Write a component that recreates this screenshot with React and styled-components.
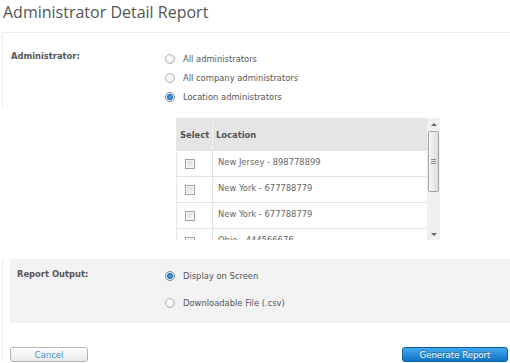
import React from "react";
import styled, { createGlobalStyle } from "styled-components";

const GlobalStyle = createGlobalStyle`
  html, body {
    margin: 0;
    padding: 0;
    background: #fff;
  }
  body {
    width: 510px;
    height: 363px;
    overflow: hidden;
    font-family: "DejaVu Sans Condensed", "Liberation Sans", sans-serif;
    font-size: 9.3px;
    color: #555;
  }
`;

const locations = [
  "New Jersey - 898778899",
  "New York - 677788779",
  "New York - 677788779",
  "Ohio - 444566676",
];

const App = () => {
  return (
    <Page>
      <GlobalStyle />
      <Title>Administrator Detail Report</Title>
      <Panel>
        <Section edge>
          <FieldRow>
            <FieldLabel>Administrator:</FieldLabel>
            <Options>
              <Option>
                <Radio />
                <span>All administrators</span>
              </Option>
              <Option>
                <Radio />
                <span>All company administrators</span>
              </Option>
              <Option>
                <Radio checked />
                <span>Location administrators</span>
              </Option>
            </Options>
          </FieldRow>
        </Section>

        <TableArea>
          <TableBox>
            <Grid>
              <HeadRow>
                <HeadCell>Select</HeadCell>
                <HeadCell>Location</HeadCell>
              </HeadRow>
              {locations.map((loc, i) => (
                <BodyRow key={i}>
                  <CheckCell>
                    <Checkbox />
                  </CheckCell>
                  <TextCell>{loc}</TextCell>
                </BodyRow>
              ))}
            </Grid>
            <Scrollbar>
              <Arrow />
              <Track>
                <Thumb>
                  <Grip />
                </Thumb>
              </Track>
              <Arrow down />
            </Scrollbar>
          </TableBox>
        </TableArea>

        <Section edge>
          <OutputBox>
            <OutputLabel>Report Output:</OutputLabel>
            <Options>
              <Option tall>
                <Radio checked />
                <span>Display on Screen</span>
              </Option>
              <Option tall>
                <Radio />
                <span>Downloadable File (.csv)</span>
              </Option>
            </Options>
          </OutputBox>
          <Actions>
            <CancelButton>Cancel</CancelButton>
            <PrimaryButton>Generate Report</PrimaryButton>
          </Actions>
        </Section>
      </Panel>
    </Page>
  );
};

export default App;

const Page = styled.div`
  width: 510px;
`;

const Title = styled.h1`
  margin: 0;
  height: 32px;
  padding: 1px 0 0 3px;
  font-family: "Open Sans", "Liberation Sans", sans-serif;
  font-size: 16px;
  font-weight: 400;
  line-height: 22px;
  color: #555;
  box-sizing: border-box;
`;

const Panel = styled.div`
  border-top: 1px solid #ececec;
  margin-left: 2px;
`;

const Section = styled.div`
  border-left: 1px solid ${({ edge }) => (edge ? "#ececec" : "transparent")};
`;

const FieldRow = styled.div`
  display: flex;
  padding: 16px 0 1px 8px;
`;

const FieldLabel = styled.div`
  width: 154px;
  font-weight: 700;
  line-height: 13px;
`;

const Options = styled.div`
  display: flex;
  flex-direction: column;
`;

const Option = styled.label`
  display: flex;
  align-items: center;
  height: ${({ tall }) => (tall ? "27px" : "19px")};
  gap: 8px;
  color: #555;
`;

const Radio = styled.span`
  display: inline-block;
  width: 10px;
  height: 10px;
  border-radius: 50%;
  border: 1px solid ${({ checked }) => (checked ? "#7f8a96" : "#b4b4b4")};
  background: ${({ checked }) =>
    checked
      ? "radial-gradient(circle at 50% 50%, #5ab0ee 0, #1c6fc0 2.5px, #e8eef4 3.5px, #f6f6f6 100%)"
      : "radial-gradient(circle at 40% 40%, #ffffff 0, #e4e4e4 100%)"};
  box-sizing: border-box;
  flex: none;
`;

const TableArea = styled.div`
  padding: 11px 0 0 174px;
`;

const TableBox = styled.div`
  display: flex;
  width: 264px;
  height: 122px;
  overflow: hidden;
`;

const Grid = styled.div`
  flex: 1;
  border-left: 1px solid #e6e6e6;
`;

const HeadRow = styled.div`
  display: grid;
  grid-template-columns: 36px 1fr;
  height: 32px;
  background: #e5e5e5;
`;

const HeadCell = styled.div`
  display: flex;
  align-items: center;
  padding-left: 3px;
  font-weight: 700;
  color: #555;
  &:first-child {
    border-right: 1px solid #f2f2f2;
  }
`;

const BodyRow = styled.div`
  display: grid;
  grid-template-columns: 36px 1fr;
  height: 26px;
  border-top: 1px solid #e3e3e3;
  box-sizing: border-box;
  &:first-of-type {
    border-top: none;
  }
`;

const CheckCell = styled.div`
  display: flex;
  align-items: center;
  padding-left: 8px;
  border-right: 1px solid #e3e3e3;
`;

const TextCell = styled.div`
  padding: 5px 0 0 5px;
  color: #666;
`;

const Checkbox = styled.span`
  display: inline-block;
  width: 10px;
  height: 10px;
  border: 1px solid #a2a2a2;
  background: linear-gradient(#dedede, #f4f4f4);
  box-shadow: inset 0 0 0 1px #f8f8f8;
  box-sizing: border-box;
`;

const Scrollbar = styled.div`
  width: 13px;
  display: flex;
  flex-direction: column;
  background: #f0f0f0;
`;

const Arrow = styled.div`
  height: 12px;
  display: flex;
  align-items: center;
  justify-content: center;
  &::after {
    content: "";
    border-left: 3px solid transparent;
    border-right: 3px solid transparent;
    ${({ down }) =>
      down ? "border-top: 3px solid #666;" : "border-bottom: 3px solid #666;"}
  }
`;

const Track = styled.div`
  flex: 1;
  padding-top: 1px;
`;

const Thumb = styled.div`
  margin: 0 1px;
  height: 61px;
  border: 1px solid #a6a6a6;
  border-radius: 2px;
  background: linear-gradient(90deg, #f6f6f6, #dcdcdc);
  box-sizing: border-box;
  display: flex;
  align-items: center;
  justify-content: center;
`;

const Grip = styled.div`
  width: 5px;
  height: 5px;
  background: repeating-linear-gradient(
    #8a8a8a 0,
    #8a8a8a 1px,
    transparent 1px,
    transparent 2px
  );
`;

const OutputBox = styled.div`
  display: flex;
  margin: 19px 0 0 7px;
  padding: 3px 0 7px 7px;
  height: 64px;
  box-sizing: border-box;
  background: #f3f3f3;
`;

const OutputLabel = styled.div`
  width: 148px;
  font-weight: 700;
  line-height: 23px;
`;

const Actions = styled.div`
  display: flex;
  justify-content: space-between;
  padding: 24px 2px 0 7px;
`;

const ButtonBase = styled.button`
  height: 15px;
  padding: 0;
  border-radius: 3px;
  font-family: "DejaVu Sans Condensed", "Liberation Sans", sans-serif;
  font-size: 9.5px;
  line-height: 13px;
  cursor: pointer;
`;

const CancelButton = styled(ButtonBase)`
  width: 78px;
  border: 1px solid #b3b3b3;
  background: linear-gradient(#ffffff, #e8e8e8);
  color: #3b93d6;
`;

const PrimaryButton = styled(ButtonBase)`
  width: 106px;
  border: 1px solid #0a5da0;
  background: linear-gradient(#44a9ee, #0d73c4);
  color: #fff;
  text-shadow: 0 -1px 0 rgba(0, 0, 0, 0.35);
`;
